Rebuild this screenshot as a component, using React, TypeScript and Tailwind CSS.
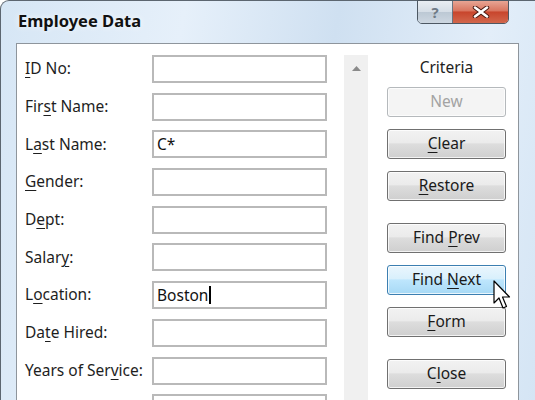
import React from "react";

const F = { fontFamily: '"Noto Sans", "Open Sans", Arial, sans-serif' };

function L({ pre, u, post }: { pre: string; u: string; post: string }) {
  return (
    <span>
      {pre}
      <span className="underline underline-offset-[3px] decoration-1">{u}</span>
      {post}
    </span>
  );
}

const rows: { pre: string; u: string; post: string; value?: string; caret?: boolean }[] = [
  { pre: "", u: "I", post: "D No:" },
  { pre: "Fir", u: "s", post: "t Name:" },
  { pre: "L", u: "a", post: "st Name:", value: "C*" },
  { pre: "", u: "G", post: "ender:" },
  { pre: "D", u: "e", post: "pt:" },
  { pre: "Salar", u: "y", post: ":" },
  { pre: "L", u: "o", post: "cation:", value: "Boston", caret: true },
  { pre: "Da", u: "t", post: "e Hired:" },
  { pre: "Years of Ser", u: "v", post: "ice:" },
  { pre: "", u: "", post: "" },
];

function Btn({
  pre,
  u,
  post,
  kind = "normal",
}: {
  pre: string;
  u: string;
  post: string;
  kind?: "normal" | "disabled" | "hover";
}) {
  const cls =
    kind === "disabled"
      ? "border-[#b5b9bc] bg-[#f4f4f4] text-[#a3a3a3]"
      : kind === "hover"
      ? "border-[#3c7fb1] bg-[linear-gradient(#eaf6fd_0%,#d9f0fc_45%,#bee6fd_50%,#a7d9f5_100%)] text-[#1a1a1a]"
      : "border-[#707070] bg-[linear-gradient(#f2f2f2_0%,#ebebeb_45%,#dddddd_50%,#cfcfcf_100%)] text-[#1a1a1a]";
  return (
    <div
      className={`w-[119px] h-[30px] rounded-[3px] border flex items-center justify-center text-[15.5px] shadow-[inset_0_0_0_1px_rgba(255,255,255,0.75)] ${cls}`}
    >
      <L pre={pre} u={u} post={post} />
    </div>
  );
}

export default function App() {
  return (
    <div
      style={F}
      className="relative w-[535px] h-[400px] overflow-hidden bg-white"
    >
      <div className="absolute left-0 top-0 w-[545px] h-[420px] rounded-tl-[9px] border-l border-t border-[#5c6670] bg-[linear-gradient(100deg,#d6e6f5_0%,#e6f0fa_30%,#cfe0f1_55%,#e3eef9_80%,#d3e4f4_100%)]">
        {/* title bar */}
        <div className="h-[42px] flex items-center pl-[17px] pb-[2px]">
          <span className="text-[16.5px] font-bold text-[#111] [text-shadow:0_0_6px_rgba(255,255,255,0.9)]">
            Employee Data
          </span>
        </div>
        {/* caption buttons */}
        <div className="absolute left-[416px] top-[-1px] h-[24px] w-[92px] flex rounded-b-[5px] border border-[#4d5863] overflow-hidden">
          <div className="w-[35px] h-full flex items-center justify-center border-r border-[#6a7480] bg-[linear-gradient(#e9eef3_0%,#d5dde6_50%,#bcc8d4_51%,#cdd7e1_100%)] text-[#6f7b87] text-[15px] font-bold leading-none">
            ?
          </div>
          <div className="flex-1 h-full flex items-center justify-center bg-[linear-gradient(#e8a594_0%,#d9755f_45%,#c8452c_50%,#d2674c_100%)]">
            <svg width="18" height="12" viewBox="0 0 18 12">
              <path
                d="M3 1.5 L15 10.5 M15 1.5 L3 10.5"
                stroke="#4a1a12"
                strokeWidth="4.5"
                strokeLinecap="round"
              />
              <path
                d="M3 1.5 L15 10.5 M15 1.5 L3 10.5"
                stroke="#ffffff"
                strokeWidth="2.6"
                strokeLinecap="round"
              />
            </svg>
          </div>
        </div>

        {/* client panel */}
        <div className="ml-[15px] w-[503px] h-[370px] bg-white border border-[#8e959c] flex">
          {/* fields */}
          <div className="flex flex-col gap-[9.7px] pt-[11px] pl-[8px]">
            {rows.map((r, i) => (
              <div key={i} className="flex items-center h-[28px]">
                <div className="w-[127px] text-[15.5px] text-[#1e1e1e] leading-none">
                  {r.u || r.pre ? <L pre={r.pre} u={r.u} post={r.post} /> : null}
                </div>
                <div className="w-[175px] h-[28px] border-2 border-[#b9b9b9] bg-white flex items-center pl-[3px] text-[15.5px] text-[#111]">
                  {r.value}
                  {r.caret && <span className="inline-block w-[1.5px] h-[18px] bg-black ml-[1px]" />}
                </div>
              </div>
            ))}
          </div>
          {/* scrollbar */}
          <div className="ml-[17px] mt-[11px] w-[24px] bg-[#f0f0f0] flex justify-center pt-[11px]">
            <svg width="9" height="5" viewBox="0 0 9 5">
              <path d="M0 5 L4.5 0 L9 5 Z" fill="#8a8a8a" />
            </svg>
          </div>
          {/* buttons */}
          <div className="ml-[19px] flex flex-col items-center w-[119px]">
            <div className="mt-[13px] h-[20px] text-[15.5px] text-[#1e1e1e] leading-[20px]">Criteria</div>
            <div className="mt-[10px] flex flex-col gap-[12px]">
              <Btn pre="New" u="" post="" kind="disabled" />
              <Btn pre="" u="C" post="lear" />
              <Btn pre="" u="R" post="estore" />
            </div>
            <div className="mt-[22px] flex flex-col gap-[12px]">
              <Btn pre="Find " u="P" post="rev" />
              <Btn pre="Find " u="N" post="ext" kind="hover" />
              <Btn pre="" u="F" post="orm" />
            </div>
            <div className="mt-[22px]">
              <Btn pre="C" u="l" post="ose" />
            </div>
          </div>
        </div>
      </div>

      {/* mouse cursor */}
      <svg
        className="absolute left-[493px] top-[280px]"
        width="20"
        height="32"
        viewBox="0 0 20 32"
      >
        <path
          d="M1 1 L1 23 L6 18 L10 28 L13.5 26.5 L9.5 17 L16.5 17 Z"
          fill="#ffffff"
          stroke="#000000"
          strokeWidth="1.2"
          strokeLinejoin="round"
        />
      </svg>
    </div>
  );
}
